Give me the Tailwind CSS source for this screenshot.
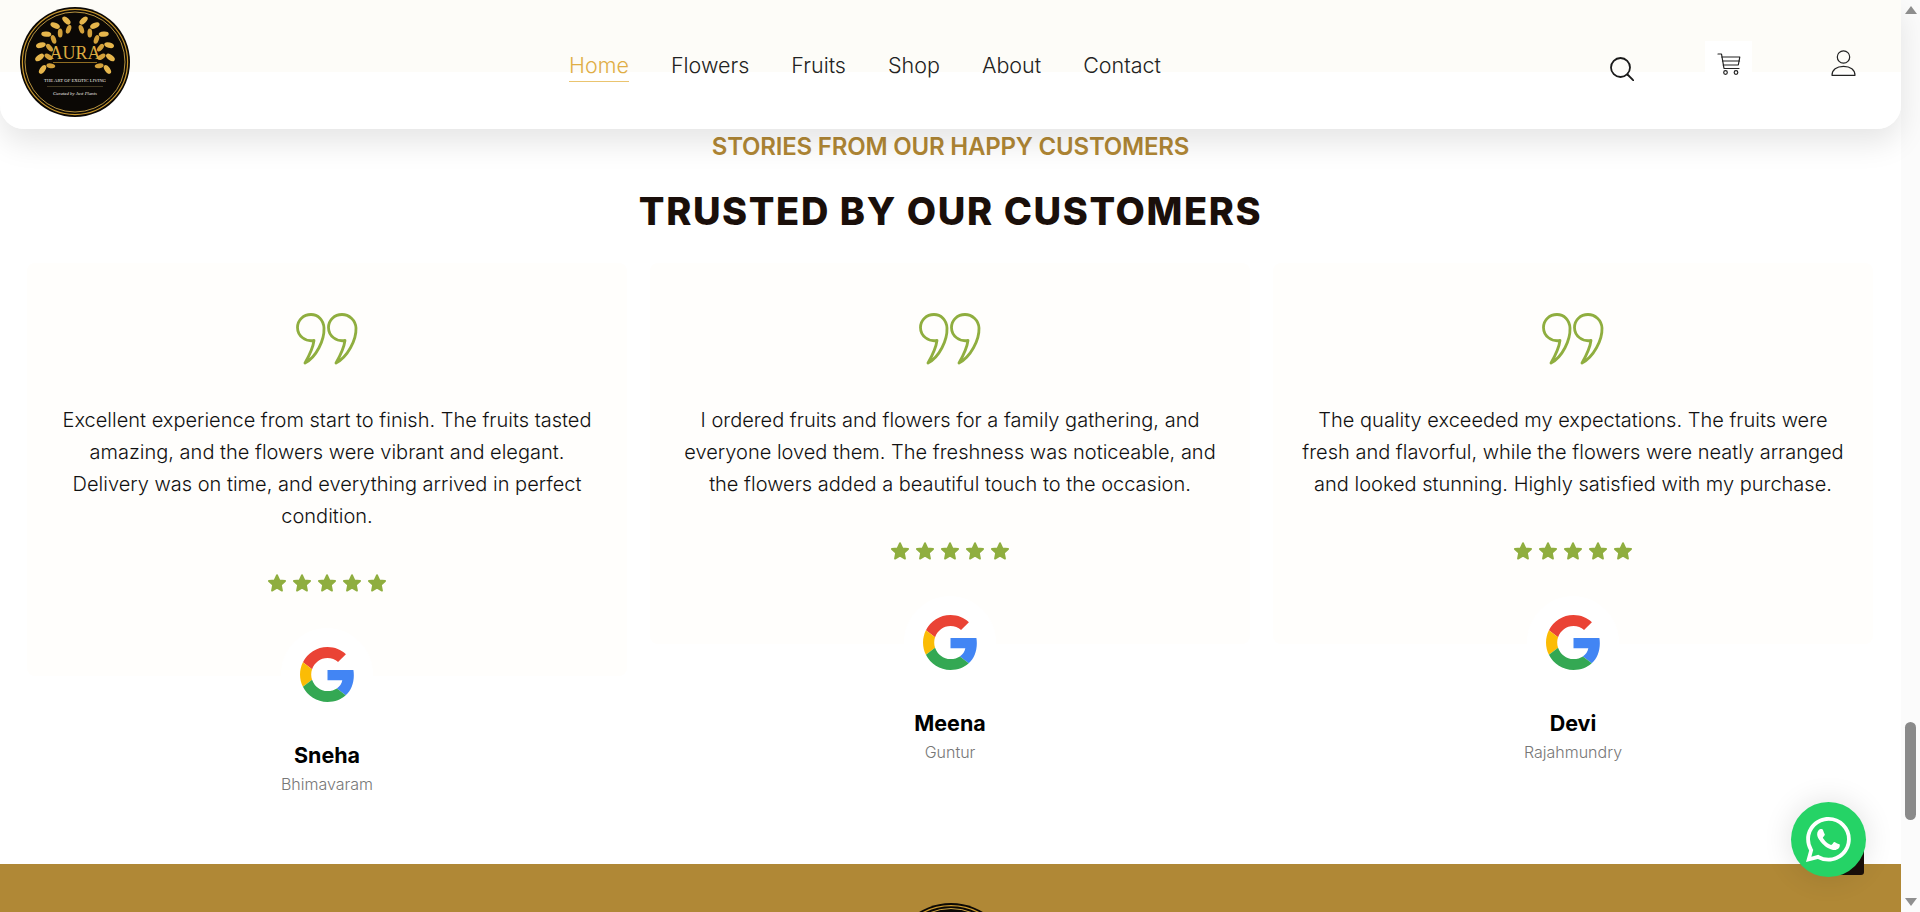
<!DOCTYPE html>
<html lang="en">
  <head>
    <meta charset="UTF-8" />
    <meta name="viewport" content="width=device-width, initial-scale=1.0" />
    <title>Aura - Testimonials</title>
    <script src="https://cdn.jsdelivr.net/npm/@tailwindcss/browser@4"></script>
  </head>
  <body class="bg-white font-['Inter',sans-serif] text-[#1a0f0a]">
    <!-- shared icons -->
    <svg width="0" height="0" class="absolute">
      <defs>
        <g id="leaf-pair">
          <ellipse cx="55" cy="12.500" rx="2.700" ry="5" fill="#e6b64c" transform="rotate(-32 55 12.500)" />
          <ellipse cx="55" cy="21.500" rx="2.400" ry="4.500" fill="#d2a03a" transform="rotate(34 55 21.500)" />
        </g>
        <g id="wreath-side">
          <use href="#leaf-pair" transform="rotate(-14 55 48)" />
          <use href="#leaf-pair" transform="rotate(-34 55 48)" />
          <use href="#leaf-pair" transform="rotate(-54 55 48)" />
          <use href="#leaf-pair" transform="rotate(-74 55 48)" />
          <use href="#leaf-pair" transform="rotate(-94 55 48)" />
          <use href="#leaf-pair" transform="rotate(-114 55 48)" />
        </g>
        <symbol id="aura-logo" viewBox="0 0 110 110">
          <circle cx="55" cy="55" r="55" fill="#0b0805" />
          <circle cx="55" cy="55" r="52.600" fill="none" stroke="#c9982f" stroke-width="1.200" />
          <circle cx="55" cy="55" r="50" fill="none" stroke="#e6b94e" stroke-width="0.800" />
          <use href="#wreath-side" />
          <use href="#wreath-side" transform="translate(110 0) scale(-1 1)" />
          <text x="55" y="52" text-anchor="middle" font-family="Liberation Serif" font-size="18" fill="#dcaa40">AURA</text>
          <rect x="33" y="55" width="44" height="0.700" fill="#c9982f" />
          <text x="55" y="75" text-anchor="middle" font-family="Liberation Serif" font-size="4.700" fill="#f1efe8">THE ART OF EXOTIC LIVING</text>
          <rect x="27" y="79" width="56" height="0.500" fill="#7a6a40" />
          <text x="55" y="88" text-anchor="middle" font-family="Liberation Serif" font-style="italic" font-size="4.800" fill="#f1efe8">Curated by Just Plants</text>
        </symbol>
        <symbol id="quote" viewBox="0 0 62 52">
          <path fill="none" stroke="#8fae3f" stroke-width="2.800" stroke-linejoin="round" d="M15 1.500C22 1.500 27.500 7 28 15 28.500 27 20.500 44 9 50 13 43 17 35 18 27.500 9.500 29 1.500 23 1.500 14.500 1.500 7 7.500 1.500 15 1.500Z" />
          <path fill="none" stroke="#8fae3f" stroke-width="2.800" stroke-linejoin="round" d="M46 1.500C53 1.500 59.500 7 60 15 60.500 27 51.500 44 40 50 44 43 48 35 49 27.500 40.500 29 32.500 23 32.500 14.500 32.500 7 38.500 1.500 46 1.500Z" />
        </symbol>
        <symbol id="star" viewBox="0 0 24 24">
          <path fill="#8fae3f" stroke="#8fae3f" stroke-width="2.200" stroke-linejoin="round" d="M12 2.500l2.900 6.300 6.800.800-5 4.700 1.300 6.800-6-3.400-6 3.400 1.300-6.800-5-4.700 6.800-.800z" />
        </symbol>
        <symbol id="google" viewBox="0 0 48 48">
          <path fill="#EA4335" d="M24 9.500c3.540 0 6.710 1.220 9.210 3.600l6.850-6.850C35.900 2.380 30.470 0 24 0 14.620 0 6.510 5.380 2.560 13.220l7.980 6.190C12.430 13.720 17.740 9.500 24 9.500z" />
          <path fill="#4285F4" d="M46.980 24.550c0-1.570-.15-3.090-.38-4.550H24v9.020h12.940c-.58 2.960-2.260 5.480-4.780 7.180l7.730 6c4.510-4.180 7.090-10.360 7.090-17.650z" />
          <path fill="#FBBC05" d="M10.530 28.590c-.48-1.450-.76-2.990-.76-4.590s.27-3.140.76-4.590l-7.980-6.190C.92 16.460 0 20.120 0 24c0 3.880.92 7.540 2.560 10.780l7.970-6.190z" />
          <path fill="#34A853" d="M24 48c6.480 0 11.930-2.130 15.890-5.810l-7.730-6c-2.150 1.450-4.920 2.300-8.160 2.300-6.260 0-11.570-4.220-13.470-9.910l-7.980 6.190C6.510 42.620 14.620 48 24 48z" />
        </symbol>
      </defs>
    </svg>

    <div class="relative flex h-[912px] overflow-hidden">
      <div class="w-[1901px] shrink-0">
        <!-- Header -->
        <header class="relative z-10 flex h-[129px] items-start rounded-b-[24px] bg-[linear-gradient(#fdfcf8_72px,#ffffff_72px)] pl-5 shadow-[0_14px_30px_rgba(0,0,0,0.1)]">
          <a href="#" class="mt-[7px] block h-[110px] w-[110px]">
            <svg class="h-full w-full"><use href="#aura-logo" /></svg>
          </a>
          <nav class="ml-[439px] mt-[52px] flex gap-[42px] text-[21.500px] font-light leading-[26px] text-[#222222]">
            <a href="#" class="block h-[30px] border-b border-[#eac46f] text-[#e0ae46]">Home</a>
            <a href="#">Flowers</a>
            <a href="#">Fruits</a>
            <a href="#">Shop</a>
            <a href="#">About</a>
            <a href="#">Contact</a>
          </nav>
          <div class="ml-[449px] flex items-start">
            <svg class="mt-[57px] h-6 w-6" viewBox="0 0 24 24" fill="none" stroke="#1a1a1a" stroke-width="1.800" stroke-linecap="round">
              <circle cx="10.500" cy="10.500" r="9.500" />
              <path d="M17.500 17.500l6 6" />
            </svg>
            <div class="ml-[71px] mt-[41px] flex h-[47px] w-[47px] items-start justify-center bg-white pt-3">
              <svg class="h-[22px] w-6" viewBox="0 0 24 22" fill="none" stroke="#222222" stroke-width="1.200" stroke-linecap="round" stroke-linejoin="round">
                <path d="M1 1h3.500l2.500 14.500h15" />
                <path d="M4.800 4h18l-1.500 8H6.300" />
                <path d="M5.500 8h17" />
                <circle cx="8.500" cy="19.500" r="1.800" />
                <circle cx="19" cy="19.500" r="1.800" />
              </svg>
            </div>
            <svg class="ml-[79px] mt-[50px] h-[26px] w-[25px]" viewBox="0 0 25 26" fill="none" stroke="#222222" stroke-width="1.200">
              <circle cx="12.500" cy="7" r="6.200" />
              <path d="M1 25.300c0-5.500 4.500-9 11.500-9s11.500 3.500 11.500 9z" stroke-linejoin="round" />
            </svg>
          </div>
        </header>

        <!-- Testimonials -->
        <section class="pt-[5px] text-center">
          <p class="text-[24px] font-semibold leading-[26px] tracking-[-0.2px] text-[#b08735]">STORIES FROM OUR HAPPY CUSTOMERS</p>
          <h2 class="mt-[27px] text-[38px] font-extrabold leading-[48px] tracking-[1.600px] text-[#1a0f0a]">TRUSTED BY OUR CUSTOMERS</h2>

          <div class="mt-[28px] grid grid-cols-[600px_600px_600px] gap-[23px] pl-[27px]">
            <article class="flex flex-col items-center">
              <div class="w-full rounded-lg bg-[#fffefc] pb-[83px] pt-[50px]">
                <svg class="mx-auto h-[52px] w-[62px]"><use href="#quote" /></svg>
                <p class="mt-[39px] text-[20px] font-light leading-[32px] text-[#111111]">Excellent experience from start to finish. The fruits tasted<br />amazing, and the flowers were vibrant and elegant.<br />Delivery was on time, and everything arrived in perfect<br />condition.</p>
                <div class="mt-[41px] flex justify-center gap-[5px]">
                  <svg class="h-5 w-5"><use href="#star" /></svg>
                  <svg class="h-5 w-5"><use href="#star" /></svg>
                  <svg class="h-5 w-5"><use href="#star" /></svg>
                  <svg class="h-5 w-5"><use href="#star" /></svg>
                  <svg class="h-5 w-5"><use href="#star" /></svg>
                </div>
              </div>
              <div class="-mt-[48px] flex h-[92px] w-[92px] items-center justify-center rounded-full bg-white">
                <svg class="h-[55px] w-[55px]"><use href="#google" /></svg>
              </div>
              <h3 class="mt-[21px] text-[21.500px] font-bold leading-[28px] text-black">Sneha</h3>
              <p class="mt-[3px] text-[16px] font-light leading-[24px] text-[#777777]">Bhimavaram</p>
            </article>

            <article class="flex flex-col items-center">
              <div class="w-full rounded-lg bg-[#fffefc] pb-[83px] pt-[50px]">
                <svg class="mx-auto h-[52px] w-[62px]"><use href="#quote" /></svg>
                <p class="mt-[39px] text-[20px] font-light leading-[32px] text-[#111111]">I ordered fruits and flowers for a family gathering, and<br />everyone loved them. The freshness was noticeable, and<br />the flowers added a beautiful touch to the occasion.</p>
                <div class="mt-[41px] flex justify-center gap-[5px]">
                  <svg class="h-5 w-5"><use href="#star" /></svg>
                  <svg class="h-5 w-5"><use href="#star" /></svg>
                  <svg class="h-5 w-5"><use href="#star" /></svg>
                  <svg class="h-5 w-5"><use href="#star" /></svg>
                  <svg class="h-5 w-5"><use href="#star" /></svg>
                </div>
              </div>
              <div class="-mt-[48px] flex h-[92px] w-[92px] items-center justify-center rounded-full bg-white">
                <svg class="h-[55px] w-[55px]"><use href="#google" /></svg>
              </div>
              <h3 class="mt-[21px] text-[21.500px] font-bold leading-[28px] text-black">Meena</h3>
              <p class="mt-[3px] text-[16px] font-light leading-[24px] text-[#777777]">Guntur</p>
            </article>

            <article class="flex flex-col items-center">
              <div class="w-full rounded-lg bg-[#fffefc] pb-[83px] pt-[50px]">
                <svg class="mx-auto h-[52px] w-[62px]"><use href="#quote" /></svg>
                <p class="mt-[39px] text-[20px] font-light leading-[32px] text-[#111111]">The quality exceeded my expectations. The fruits were<br />fresh and flavorful, while the flowers were neatly arranged<br />and looked stunning. Highly satisfied with my purchase.</p>
                <div class="mt-[41px] flex justify-center gap-[5px]">
                  <svg class="h-5 w-5"><use href="#star" /></svg>
                  <svg class="h-5 w-5"><use href="#star" /></svg>
                  <svg class="h-5 w-5"><use href="#star" /></svg>
                  <svg class="h-5 w-5"><use href="#star" /></svg>
                  <svg class="h-5 w-5"><use href="#star" /></svg>
                </div>
              </div>
              <div class="-mt-[48px] flex h-[92px] w-[92px] items-center justify-center rounded-full bg-white">
                <svg class="h-[55px] w-[55px]"><use href="#google" /></svg>
              </div>
              <h3 class="mt-[21px] text-[21.500px] font-bold leading-[28px] text-black">Devi</h3>
              <p class="mt-[3px] text-[16px] font-light leading-[24px] text-[#777777]">Rajahmundry</p>
            </article>
          </div>
        </section>
      </div>

      <!-- Scrollbar -->
      <aside class="flex w-[19px] shrink-0 flex-col items-center justify-between bg-[#fbfbfb] py-[6px]">
        <div class="h-0 w-0 border-x-[6px] border-b-[8px] border-x-transparent border-b-[#8f8f8f]"></div>
        <div class="mb-[74px] mt-[703px] h-[98px] w-[11px] rounded-full bg-[#8a8a8a]"></div>
        <div class="h-0 w-0 border-x-[6px] border-t-[8px] border-x-transparent border-t-[#8f8f8f]"></div>
      </aside>

      <!-- Footer, cut by the window -->
      <footer class="absolute left-0 top-[864px] flex h-[48px] w-[1901px] justify-center overflow-hidden bg-[#b08836] pt-[39px]">
        <svg class="h-[122px] w-[122px] shrink-0"><use href="#aura-logo" /></svg>
      </footer>

      <!-- Back to top + WhatsApp -->
      <div class="absolute left-[1824px] top-[840px] h-[35px] w-[40px] rounded-[3px] bg-[#1a0f0a]"></div>
      <a href="#" class="absolute left-[1791px] top-[802px] flex h-[75px] w-[75px] items-center justify-center rounded-full bg-[#25d366] shadow-[0_0_30px_rgba(0,0,0,0.12)]">
        <svg class="h-[45px] w-[45px]" viewBox="0 0 16 16" fill="#ffffff">
          <path d="M13.601 2.326A7.854 7.854 0 0 0 7.994 0C3.627 0 .068 3.558.064 7.926c0 1.399.366 2.760 1.057 3.965L0 16l4.204-1.102a7.933 7.933 0 0 0 3.790.965h.004c4.368 0 7.926-3.558 7.930-7.930A7.898 7.898 0 0 0 13.600 2.326zM7.994 14.521a6.573 6.573 0 0 1-3.356-.920l-.240-.144-2.494.654.666-2.433-.156-.251a6.560 6.560 0 0 1-1.007-3.505c0-3.626 2.957-6.584 6.591-6.584a6.560 6.560 0 0 1 4.660 1.931 6.557 6.557 0 0 1 1.928 4.660c-.004 3.639-2.961 6.592-6.592 6.592zm3.615-4.934c-.197-.099-1.170-.578-1.353-.646-.182-.065-.315-.099-.445.099-.133.197-.513.646-.627.775-.114.133-.232.148-.430.050-.197-.100-.836-.308-1.592-.985-.590-.525-.985-1.175-1.103-1.372-.114-.198-.011-.304.088-.403.087-.088.197-.232.296-.346.100-.114.133-.198.198-.330.065-.134.034-.248-.015-.347-.050-.099-.445-1.076-.612-1.470-.160-.389-.323-.335-.445-.340-.114-.007-.247-.007-.380-.007a.729.729 0 0 0-.529.247c-.182.198-.691.677-.691 1.654 0 .977.710 1.916.810 2.049.098.133 1.394 2.132 3.383 2.992.470.205.840.326 1.129.418.475.152.904.129 1.246.080.380-.058 1.171-.480 1.338-.943.164-.464.164-.860.114-.943-.049-.084-.182-.133-.380-.232z" />
        </svg>
      </a>
    </div>
  </body>
</html>
